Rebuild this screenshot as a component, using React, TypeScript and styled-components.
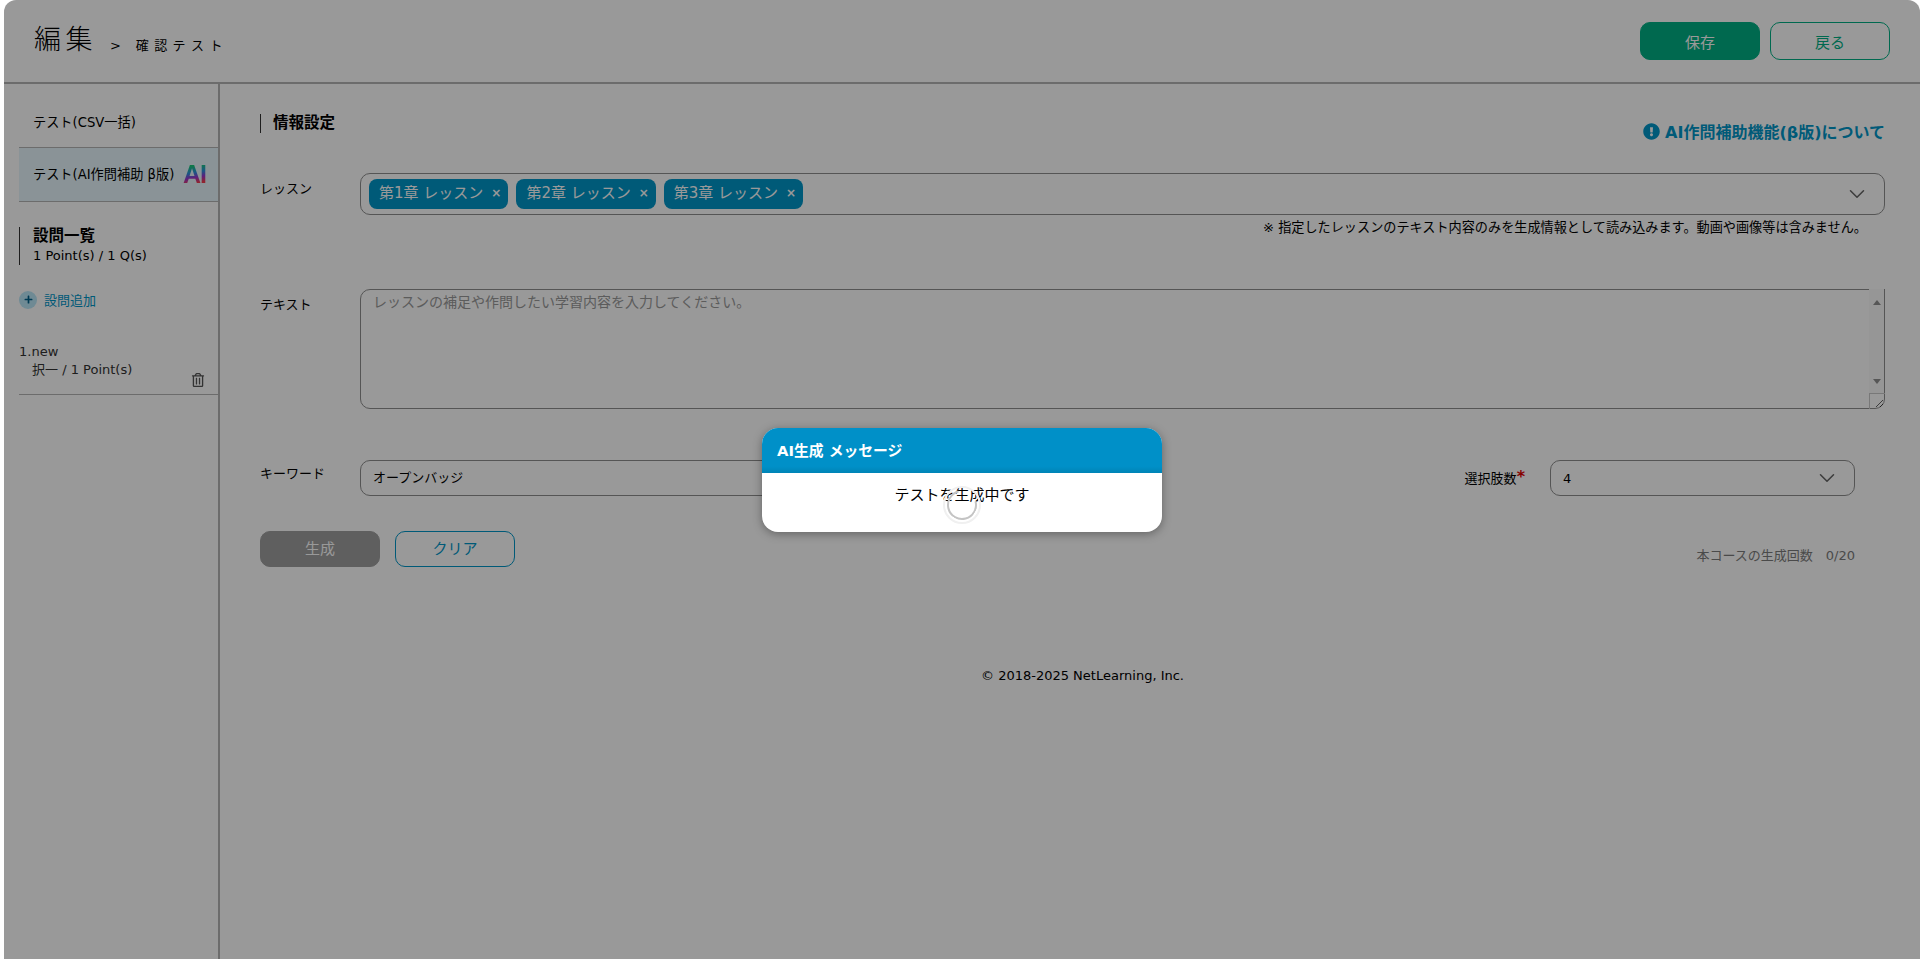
import React from "react";
import styled, { createGlobalStyle } from "styled-components";
import { FaExclamationCircle, FaPlus, FaRegTrashAlt } from "react-icons/fa";
import { ChevronDown } from "lucide-react";

const GlobalStyle = createGlobalStyle`
  html, body {
    margin: 0;
    padding: 0;
    background: #fff;
  }
  * {
    box-sizing: border-box;
  }
  body {
    font-family: "DejaVu Sans", "Noto Sans CJK JP", sans-serif;
    font-size: 13px;
    color: #000;
  }
`;

const Shell = styled.div`
  position: relative;
  margin-left: 4px;
  height: 959px;
  overflow: hidden;
  display: flex;
  flex-direction: column;
`;

const Overlay = styled.div`
  position: absolute;
  inset: 0;
  background: rgba(0, 0, 0, 0.4);
  border-radius: 12px 12px 0 0;
  display: grid;
  place-items: center;
`;

const Header = styled.header`
  height: 84px;
  flex: none;
  display: flex;
  align-items: flex-start;
  justify-content: space-between;
  border-bottom: 2px solid #b4b4b4;
  padding: 22px 30px 0 30px;
`;

const TitleGroup = styled.div`
  display: flex;
  align-items: baseline;
  padding-top: 1px;
`;

const PageTitle = styled.h1`
  margin: 0;
  font-size: 27px;
  font-weight: 300;
  letter-spacing: 4.5px;
  line-height: 34px;
`;

const Crumb = styled.span`
  margin-left: 13px;
  font-size: 13px;
  letter-spacing: 5.4px;
  transform: translateY(1px);
`;

const HeaderActions = styled.div`
  display: flex;
  gap: 10px;
`;

const Button = styled.button<{ $variant: "solid" | "outline" | "disabled" | "clear" }>`
  width: 120px;
  height: ${(p) => (p.$variant === "solid" || p.$variant === "outline" ? "38px" : "36px")};
  border-radius: 10px;
  font-family: inherit;
  font-size: 15px;
  padding: 0 0 ${(p) => (p.$variant === "solid" || p.$variant === "outline" ? "0" : "3px")};
  border: 1px solid
    ${(p) =>
      p.$variant === "disabled"
        ? "#9e9e9e"
        : p.$variant === "clear"
          ? "#0096c8"
          : "#00b084"};
  background: ${(p) =>
    p.$variant === "solid" ? "#00b084" : p.$variant === "disabled" ? "#9e9e9e" : "#fff"};
  color: ${(p) =>
    p.$variant === "outline" ? "#00b084" : p.$variant === "clear" ? "#0096c8" : "#fff"};
`;

const Body = styled.div`
  flex: 1;
  display: flex;
  min-height: 0;
`;

const Sidebar = styled.aside`
  width: 216px;
  flex: none;
  border-right: 2px solid #b4b4b4;
  padding-left: 15px;
`;

const Tab = styled.div<{ $active?: boolean }>`
  height: ${(p) => (p.$active ? "55px" : "63px")};
  padding: ${(p) => (p.$active ? "0 12px 2px 14px" : "11px 12px 0 14px")};
  display: flex;
  align-items: center;
  justify-content: space-between;
  font-size: 13.2px;
  background: ${(p) => (p.$active ? "#e6f6fc" : "transparent")};
  border-top: ${(p) => (p.$active ? "1px solid #b4b4b4" : "none")};
  border-bottom: ${(p) => (p.$active ? "1px solid #b4b4b4" : "none")};
`;

const AiMark = styled.span`
  font-family: "Liberation Sans", sans-serif;
  font-size: 25px;
  font-weight: 700;
  line-height: 26px;
  letter-spacing: -1px;
  background: linear-gradient(170deg, #18c878 22%, #2d8fe0 45%, #9a35d0 62%, #f03c50 80%);
  -webkit-background-clip: text;
  background-clip: text;
  color: transparent;
`;

const QuestionSummary = styled.div`
  margin-top: 25px;
  border-left: 1px solid #333;
  padding-left: 13px;
  height: 38px;
`;

const SummaryTitle = styled.div`
  font-size: 15.5px;
  font-weight: 700;
  line-height: 19px;
`;

const SummaryMeta = styled.div`
  font-size: 13px;
  line-height: 19px;
`;

const AddQuestion = styled.div`
  margin-top: 25px;
  display: flex;
  align-items: center;
  gap: 7px;
  color: #0096c8;
  font-size: 13px;
`;

const PlusBadge = styled.span`
  width: 18px;
  height: 18px;
  border-radius: 50%;
  background: #b9e6f7;
  color: #00618a;
  display: grid;
  place-items: center;
  font-size: 9px;
`;

const QuestionItem = styled.div`
  position: relative;
  margin-top: 34px;
  height: 52px;
  border-bottom: 1px solid #b4b4b4;
  color: #333;
  font-size: 13px;
  line-height: 18px;
`;

const QuestionMeta = styled.div`
  padding-left: 13px;
`;

const TrashButton = styled.span`
  position: absolute;
  right: 13px;
  top: 30px;
  font-size: 14px;
  color: #555;
`;

const Main = styled.main`
  flex: 1;
  min-width: 0;
  padding: 30px 35px 0 40px;
`;

const InfoHead = styled.div`
  display: flex;
  justify-content: space-between;
  align-items: flex-start;
  height: 59px;
`;

const SectionTitle = styled.h2`
  margin: 0;
  border-left: 1px solid #333;
  padding-left: 12px;
  font-size: 15.5px;
  font-weight: 700;
  line-height: 19px;
`;

const AboutLink = styled.a`
  display: flex;
  align-items: center;
  gap: 5px;
  margin-top: 5px;
  color: #0096c8;
  font-size: 16px;
  font-weight: 700;
  svg {
    font-size: 17px;
  }
`;

const FieldRow = styled.div<{ $gap: number }>`
  display: grid;
  grid-template-columns: 100px 1fr;
  margin-bottom: ${(p) => p.$gap}px;
`;

const FieldLabel = styled.label<{ $top?: number }>`
  padding-top: ${(p) => p.$top ?? 7}px;
  font-size: 13px;
  line-height: 18px;
`;

const TagSelect = styled.div`
  height: 42px;
  border: 1px solid #8e8e8e;
  border-radius: 10px;
  padding: 0 14px 0 8px;
  display: flex;
  align-items: center;
  justify-content: space-between;
  color: #666;
`;

const TagList = styled.div`
  display: flex;
  gap: 8px;
`;

const Tag = styled.span`
  height: 30px;
  padding: 0 7px 2px 10px;
  border-radius: 8px;
  background: #0096c8;
  color: #fff;
  display: flex;
  align-items: center;
  gap: 8px;
  font-size: 15px;
  line-height: 26px;
`;

const TagClose = styled.span`
  font-size: 12px;
  font-weight: 700;
`;

const Note = styled.div`
  margin-top: 5px;
  padding-right: 18px;
  text-align: right;
  font-size: 13.15px;
  line-height: 16px;
`;

const TextBoxFrame = styled.div`
  position: relative;
  height: 120px;
`;

const TextBox = styled.textarea`
  display: block;
  width: 100%;
  height: 120px;
  border: 1px solid #8e8e8e;
  border-radius: 10px;
  padding: 3px 12px;
  font-family: inherit;
  font-size: 14px;
  line-height: 18px;
  resize: both;
  outline: none;
  &::placeholder {
    color: #999;
  }
`;

const ScrollTrack = styled.div`
  position: absolute;
  right: 0;
  top: 0;
  bottom: 16px;
  width: 16px;
  background: #fafafa;
  border-right: 1px solid #8e8e8e;
  display: flex;
  flex-direction: column;
  align-items: center;
  justify-content: space-between;
  padding: 11px 0 9px;
`;

const ScrollArrow = styled.span<{ $down?: boolean }>`
  width: 0;
  height: 0;
  border-left: 4.5px solid transparent;
  border-right: 4.5px solid transparent;
  border-bottom: ${(p) => (p.$down ? "none" : "5px solid #909090")};
  border-top: ${(p) => (p.$down ? "5px solid #909090" : "none")};
`;

const ResizeCorner = styled.div`
  position: absolute;
  right: 0;
  bottom: 0;
  width: 16px;
  height: 16px;
  border-left: 1px solid #c8c8c8;
  border-top: 1px solid #c8c8c8;
  pointer-events: none;
`;

const KeywordRow = styled.div`
  display: flex;
  align-items: flex-start;
  padding-right: 30px;
`;

const KeywordLabel = styled(FieldLabel)`
  width: 100px;
  flex: none;
`;

const KeywordInput = styled.input`
  width: 700px;
  height: 36px;
  border: 1px solid #8e8e8e;
  border-radius: 10px;
  padding: 0 12px 4px;
  font-family: inherit;
  font-size: 13px;
  outline: none;
`;

const ChoiceGroup = styled.div`
  margin-left: auto;
  display: flex;
  align-items: center;
  gap: 25px;
`;

const ChoiceLabel = styled.span`
  font-size: 13px;
  padding-bottom: 2px;
`;

const Required = styled.span`
  color: #e00000;
  font-weight: 700;
  font-size: 16px;
  line-height: 0;
  vertical-align: 1px;
`;

const ChoiceSelect = styled.div`
  width: 305px;
  height: 36px;
  border: 1px solid #8e8e8e;
  border-radius: 10px;
  padding: 0 14px 0 12px;
  display: flex;
  align-items: center;
  justify-content: space-between;
  font-size: 13px;
`;

const ActionRow = styled.div`
  margin-top: 35px;
  display: flex;
  align-items: flex-end;
  gap: 15px;
  padding-right: 30px;
`;

const UsageCount = styled.span`
  margin-left: auto;
  margin-bottom: 3px;
  color: #7c7c7c;
  font-size: 13px;
`;

const Copyright = styled.footer`
  margin-top: 100px;
  padding-left: 20px;
  text-align: center;
  font-size: 13px;
  line-height: 18px;
`;

const Dialog = styled.div`
  position: relative;
  width: 400px;
  height: 104px;
  border-radius: 16px;
  overflow: hidden;
  background: #fff;
  box-shadow: 0 2px 10px rgba(0, 0, 0, 0.35);
`;

const DialogHead = styled.div`
  height: 45px;
  padding: 0 0 2px 15px;
  display: flex;
  align-items: center;
  color: #fff;
  font-size: 14.8px;
  font-weight: 700;
  background: linear-gradient(#0090c8 85%, #0084b6 100%);
`;

const DialogBody = styled.div`
  padding-top: 12px;
  text-align: center;
  font-size: 15px;
  line-height: 20px;
`;

const Spinner = styled.div`
  position: absolute;
  left: 181px;
  top: 58px;
  width: 38px;
  height: 38px;
  border-radius: 50%;
  border: 2px solid #f0f0f0;
  display: grid;
  place-items: center;
  &::after {
    content: "";
    width: 26px;
    height: 26px;
    border-radius: 50%;
    border: 2px solid #c4c4c4;
    border-top-color: transparent;
    transform: rotate(30deg);
  }
`;

const lessons = ["第1章 レッスン", "第2章 レッスン", "第3章 レッスン"];

export default function App() {
  return (
    <>
      <GlobalStyle />
      <Shell>
        <Header>
          <TitleGroup>
            <PageTitle>編集</PageTitle>
            <Crumb>&gt; 確認テスト</Crumb>
          </TitleGroup>
          <HeaderActions>
            <Button $variant="solid">保存</Button>
            <Button $variant="outline">戻る</Button>
          </HeaderActions>
        </Header>
        <Body>
          <Sidebar>
            <Tab>テスト(CSV一括)</Tab>
            <Tab $active>
              テスト(AI作問補助 β版)
              <AiMark>AI</AiMark>
            </Tab>
            <QuestionSummary>
              <SummaryTitle>設問一覧</SummaryTitle>
              <SummaryMeta>1 Point(s) / 1 Q(s)</SummaryMeta>
            </QuestionSummary>
            <AddQuestion>
              <PlusBadge>
                <FaPlus />
              </PlusBadge>
              設問追加
            </AddQuestion>
            <QuestionItem>
              1.new
              <QuestionMeta>択一 / 1 Point(s)</QuestionMeta>
              <TrashButton>
                <FaRegTrashAlt />
              </TrashButton>
            </QuestionItem>
          </Sidebar>
          <Main>
            <InfoHead>
              <SectionTitle>情報設定</SectionTitle>
              <AboutLink>
                <FaExclamationCircle />
                AI作問補助機能(β版)について
              </AboutLink>
            </InfoHead>
            <FieldRow $gap={53}>
              <FieldLabel>レッスン</FieldLabel>
              <div>
                <TagSelect>
                  <TagList>
                    {lessons.map((lesson) => (
                      <Tag key={lesson}>
                        {lesson}
                        <TagClose>×</TagClose>
                      </Tag>
                    ))}
                  </TagList>
                  <ChevronDown size={26} strokeWidth={1.4} />
                </TagSelect>
                <Note>※ 指定したレッスンのテキスト内容のみを生成情報として読み込みます。動画や画像等は含みません。</Note>
              </div>
            </FieldRow>
            <FieldRow $gap={51}>
              <FieldLabel>テキスト</FieldLabel>
              <TextBoxFrame>
                <TextBox placeholder="レッスンの補足や作問したい学習内容を入力してください。" />
                <ScrollTrack>
                  <ScrollArrow />
                  <ScrollArrow $down />
                </ScrollTrack>
                <ResizeCorner />
              </TextBoxFrame>
            </FieldRow>
            <KeywordRow>
              <KeywordLabel $top={5}>キーワード</KeywordLabel>
              <KeywordInput defaultValue="オープンバッジ" />
              <ChoiceGroup>
                <ChoiceLabel>
                  選択肢数<Required>*</Required>
                </ChoiceLabel>
                <ChoiceSelect>
                  4
                  <ChevronDown size={26} strokeWidth={1.4} color="#666" />
                </ChoiceSelect>
              </ChoiceGroup>
            </KeywordRow>
            <ActionRow>
              <Button $variant="disabled">生成</Button>
              <Button $variant="clear">クリア</Button>
              <UsageCount>本コースの生成回数　0/20</UsageCount>
            </ActionRow>
            <Copyright>© 2018-2025 NetLearning, Inc.</Copyright>
          </Main>
        </Body>
        <Overlay>
          <Dialog>
            <DialogHead>AI生成 メッセージ</DialogHead>
            <DialogBody>テストを生成中です</DialogBody>
            <Spinner />
          </Dialog>
        </Overlay>
      </Shell>
    </>
  );
}
